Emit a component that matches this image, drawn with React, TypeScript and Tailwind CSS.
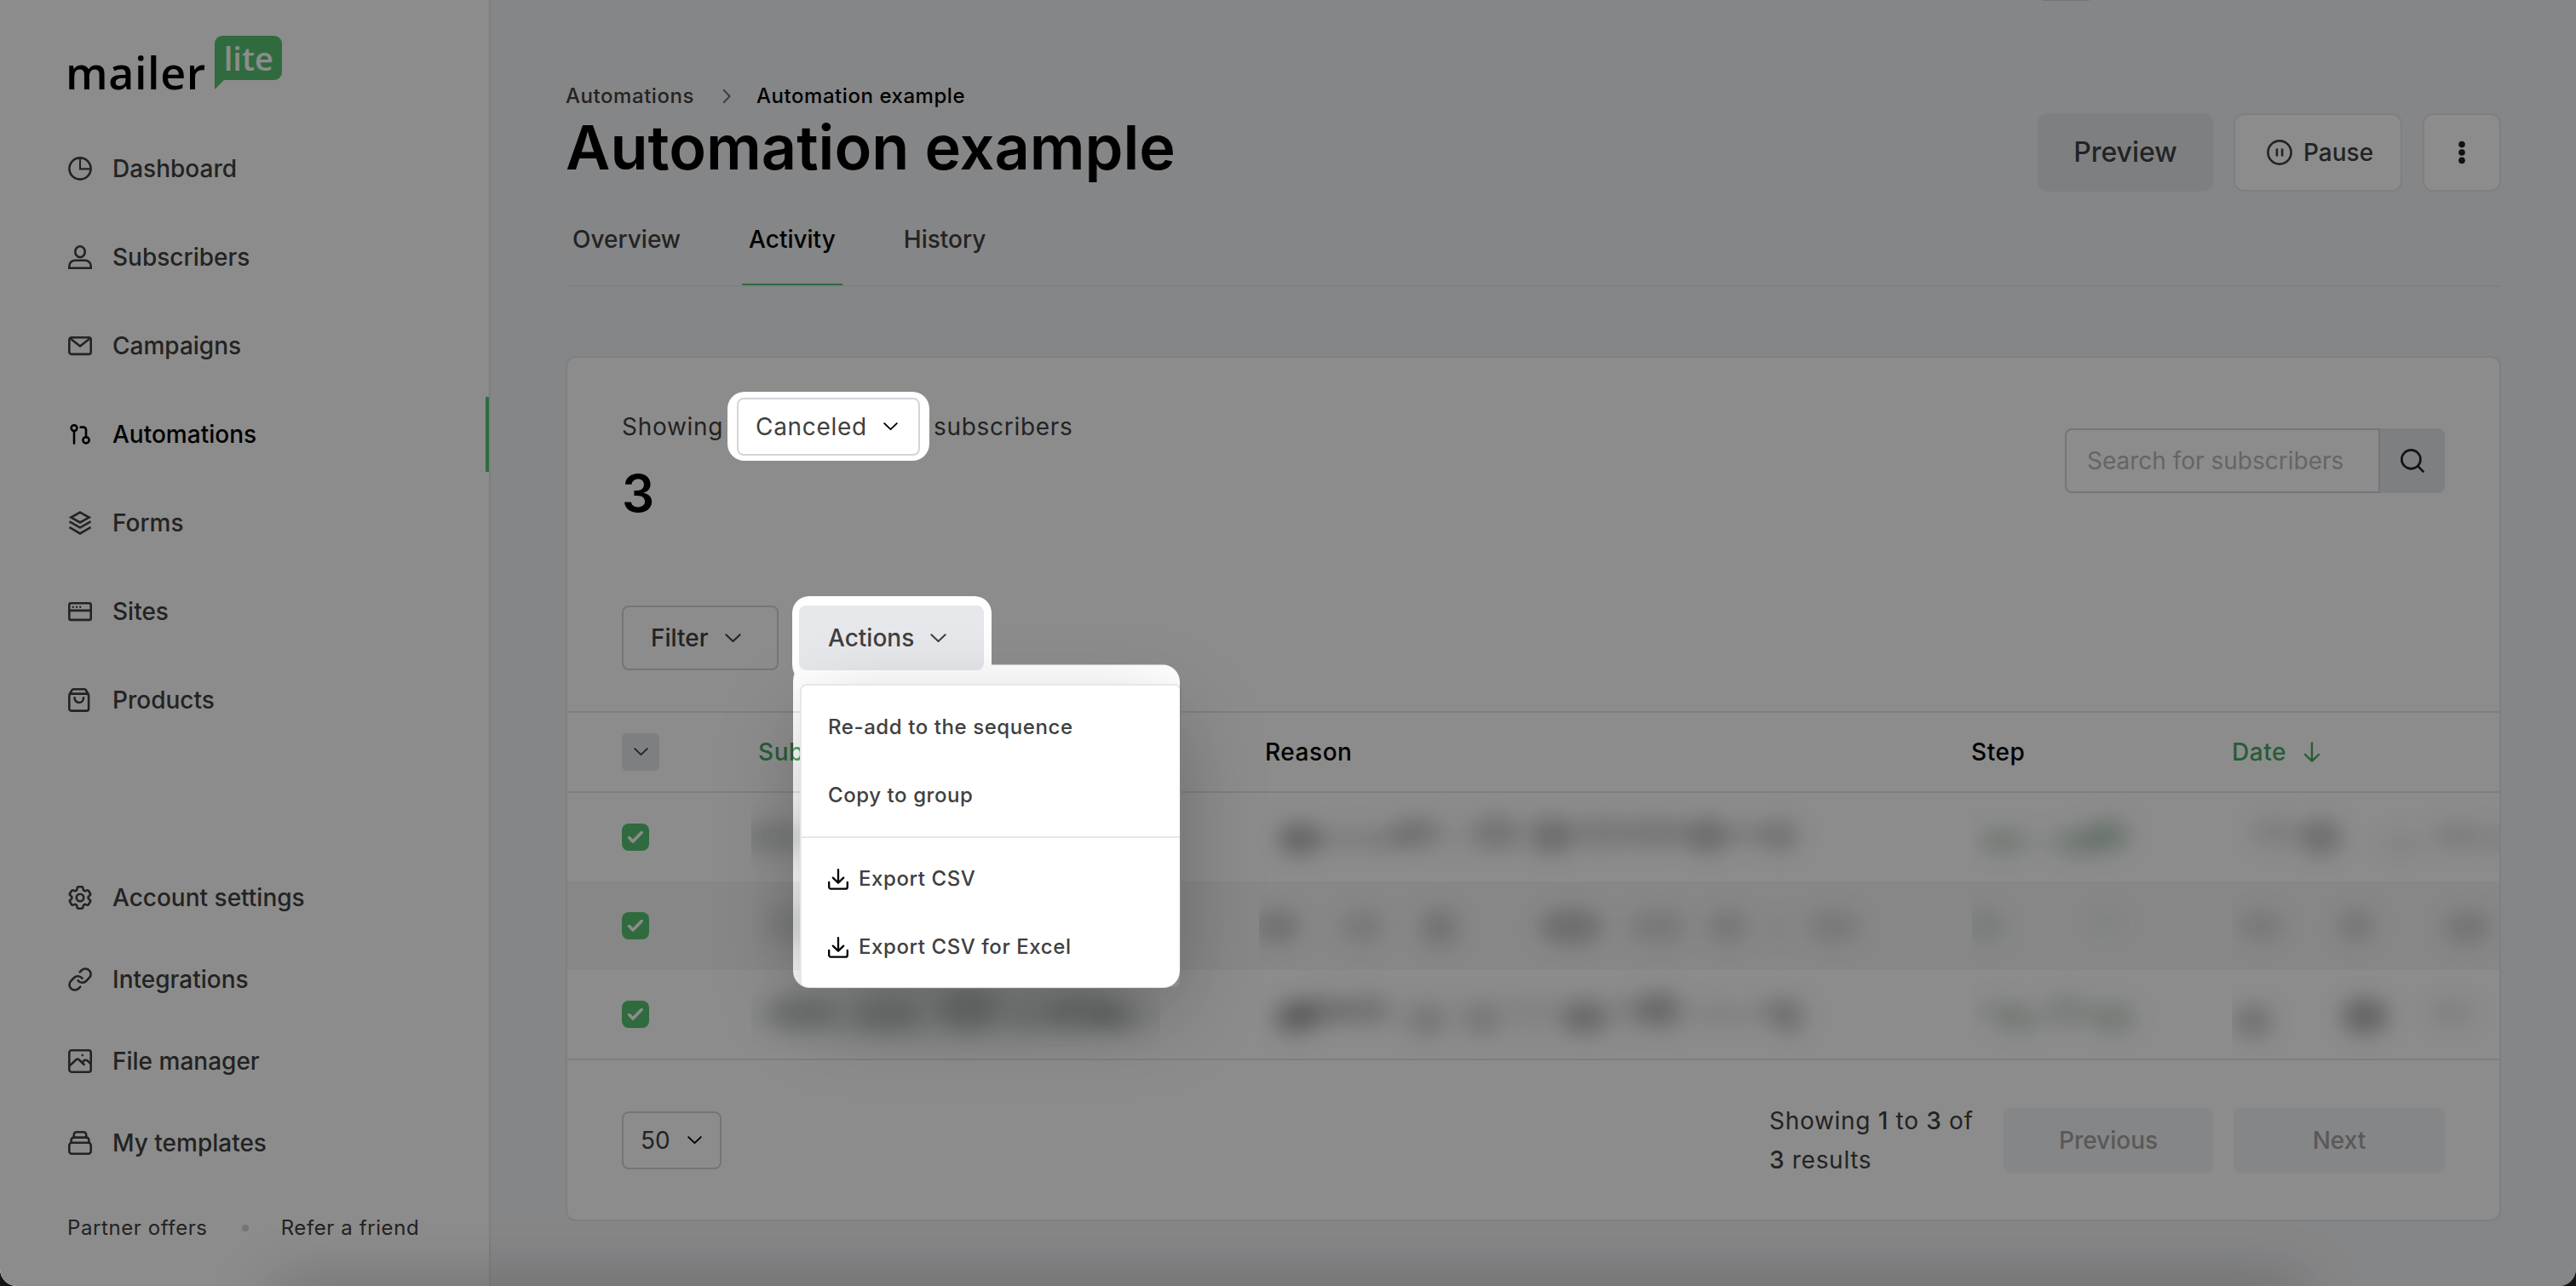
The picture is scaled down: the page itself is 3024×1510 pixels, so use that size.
import React from 'react';
import { Link } from 'lucide-react';
import { HiOutlineCog6Tooth } from 'react-icons/hi2';

type IconProps = { className?: string };

const Svg: React.FC<React.SVGProps<SVGSVGElement>> = ({ children, ...props }) => (
  <svg
    viewBox="0 0 28 28"
    fill="none"
    stroke="currentColor"
    strokeWidth={2.6}
    strokeLinecap="round"
    strokeLinejoin="round"
    className="size-7 shrink-0"
    {...props}
  >
    {children}
  </svg>
);

const DashboardIcon = () => (
  <Svg>
    <circle cx="14" cy="14" r="12.6" />
    <path d="M14 1.6V14.4H26.4" strokeWidth={2.1} strokeLinejoin="miter" />
  </Svg>
);

const SubscribersIcon = () => (
  <Svg strokeLinejoin="miter">
    <ellipse cx="14" cy="7.7" rx="5.7" ry="6.4" />
    <path d="M1.3 26.7v-2.2a6.8 6.8 0 0 1 6.8-6.8h11.8a6.8 6.8 0 0 1 6.8 6.8v2.2z" />
  </Svg>
);

const CampaignsIcon = () => (
  <Svg>
    <rect x="1.3" y="4.3" width="25.4" height="19.6" rx="2.6" />
    <path d="M2.6 5.6 14 14.6 25.4 5.6" />
  </Svg>
);

const AutomationsIcon = () => (
  <Svg>
    <circle cx="7" cy="6.6" r="3.4" />
    <path d="M7 10.2V24.6" />
    <path d="M14.6 5.6H18a3 3 0 0 1 3 3V17" />
    <circle cx="21" cy="20.8" r="3.6" />
  </Svg>
);

const FormsIcon = () => (
  <Svg strokeLinecap="butt" strokeLinejoin="miter">
    <path d="M14 1.6 24.6 7.6 14 13.4 3.4 7.6z" />
    <path d="M1.5 12.4 14 19.6 26.5 12.4" />
    <path d="M1.5 19.2 14 26.4 26.5 19.2" />
  </Svg>
);

const SitesIcon = () => (
  <Svg>
    <rect x="1.3" y="4.3" width="25.4" height="19.6" rx="2" />
    <path d="M1.8 12.9H26.4" />
    <path d="M5.8 8.7h.01M10 8.7h.01M14.2 8.7h.01" strokeWidth={2.4} />
  </Svg>
);

const ProductsIcon = () => (
  <Svg>
    <rect x="1.3" y="6.6" width="22.8" height="20" rx="2.4" />
    <path d="M1.8 7 4.6 2.2c.3-.6.8-.9 1.5-.9h13.2c.7 0 1.2.3 1.5.9L23.6 7" />
    <path d="M7.6 11.4c0 7.4 10.4 7.4 10.4 0" />
  </Svg>
);

const SettingsIcon = () => (
  <HiOutlineCog6Tooth viewBox="2.1 2.1 19.8 19.8" strokeWidth={1.85} className="size-7 shrink-0" />
);

const IntegrationsIcon = () => (
  <Link viewBox="0.9 0.9 22.2 22.2" strokeWidth={2.1} className="size-7 shrink-0" />
);

const FilesIcon = () => (
  <Svg>
    <rect x="1.3" y="1.3" width="25.4" height="25.4" rx="2.6" />
    <path d="M1.8 19.4 9.4 12.2c1-1 2.3-1 3.3 0L19.4 18.6" strokeLinecap="butt" />
    <path d="M17 16.2c.6-4 4.6-4.4 6.6-1.8l2.6 2.4" />
    <path d="M16.8 7h.01" />
  </Svg>
);

const TemplatesIcon = () => (
  <Svg>
    <rect x="1.3" y="13.7" width="25.4" height="13" rx="3" />
    <path d="M3.6 13.5v-2.9a3 3 0 0 1 3-3h14.8a3 3 0 0 1 3 3v2.9" />
    <path d="M6.8 7.4V4.3a3 3 0 0 1 3-3h8.4a3 3 0 0 1 3 3v3.1" />
  </Svg>
);

const Chevron: React.FC<IconProps> = ({ className = 'w-[19px]' }) => (
  <svg viewBox="0 0 20 11" fill="none" stroke="currentColor" strokeWidth={2.2} strokeLinecap="round" strokeLinejoin="round" className={`shrink-0 ${className}`}>
    <path d="M1.4 1.3 10 9.6 18.6 1.3" />
  </svg>
);

const ExportIcon = () => (
  <svg viewBox="0 0 24 25" fill="none" stroke="#000" strokeWidth={2.3} strokeLinecap="round" strokeLinejoin="round" className="h-[25px] w-6 shrink-0">
    <path d="M12 1.2V16.4M5.8 10.6 12 16.6l6.2-6" />
    <path d="M1.2 15.8v5.6a2.2 2.2 0 0 0 2.2 2.2h17.2a2.2 2.2 0 0 0 2.2-2.2v-5.6" />
  </svg>
);

const navItems = [
  { label: 'Dashboard', icon: <DashboardIcon /> },
  { label: 'Subscribers', icon: <SubscribersIcon /> },
  { label: 'Campaigns', icon: <CampaignsIcon /> },
  { label: 'Automations', icon: <AutomationsIcon />, active: true },
  { label: 'Forms', icon: <FormsIcon /> },
  { label: 'Sites', icon: <SitesIcon /> },
  { label: 'Products', icon: <ProductsIcon /> },
];

const secondaryItems = [
  { label: 'Account settings', icon: <SettingsIcon /> },
  { label: 'Integrations', icon: <IntegrationsIcon /> },
  { label: 'File manager', icon: <FilesIcon /> },
  { label: 'My templates', icon: <TemplatesIcon /> },
];

const Sidebar = () => (
  <aside className="flex w-[576px] shrink-0 flex-col border-r-2 border-gray-200 bg-white">
    <div className="flex h-[146px] items-start pl-[77px]">
      <span className="mt-[49px] font-['Open_Sans'] text-[52px] leading-[72px] font-semibold tracking-[0.6px] text-black">mailer</span>
      <div className="relative mt-[42px] ml-2.5 flex h-[52px] w-[79px] items-center justify-center rounded-[9px] rounded-bl-none bg-[#57c472]">
        <span className="-mt-px ml-px font-['Open_Sans'] text-[38px] leading-[52px] font-semibold text-white">lite</span>
        <svg viewBox="0 0 12 12" className="absolute top-[51px] left-0 size-3 fill-[#57c472]">
          <path d="M0 0H12L0 12z" />
        </svg>
      </div>
    </div>
    <nav>
      {navItems.map((item) => (
        <div
          key={item.label}
          className={`relative flex h-[104px] items-center gap-6 pl-20 text-[28px] font-medium ${item.active ? 'text-black' : 'text-[#404040]'}`}
        >
          {item.icon}
          <span>{item.label}</span>
          {item.active && <span className="absolute top-[8px] right-0 h-[88px] w-1 bg-[#57c472]" />}
        </div>
      ))}
    </nav>
    <div className="mt-[132px]">
      {secondaryItems.map((item) => (
        <div key={item.label} className="flex h-24 items-center gap-6 pl-20 text-[28px] font-medium text-[#404040]">
          {item.icon}
          <span>{item.label}</span>
        </div>
      ))}
    </div>
    <div className="mt-9 flex items-center pl-[79px] text-2xl tracking-[0.6px] text-[#404040]">
      <span>Partner offers</span>
      <span className="mr-[38px] ml-10 size-2 rounded-full bg-gray-300" />
      <span>Refer a friend</span>
    </div>
  </aside>
);

const Header = () => (
  <header>
    <div className="flex items-start justify-between">
      <div className="pt-[97px]">
        <div className="flex items-center text-2xl leading-8 font-medium tracking-[0.55px] text-[#404040]">
          <span>Automations</span>
          <svg viewBox="0 0 10 18" fill="none" stroke="#6b7280" strokeWidth={2} className="mr-[30px] ml-[33px] h-[18px] w-2.5">
            <path d="M1.2 1.2 8.6 9 1.2 16.8" />
          </svg>
          <span className="text-black">Automation example</span>
        </div>
        <h1 className="mt-[4px] text-[72px] leading-[80px] font-semibold text-black">Automation example</h1>
      </div>
      <div className="mt-[133px] flex gap-6 font-medium text-[#404040]">
        <button className="h-[92px] w-[206px] rounded-xl bg-gray-200 text-[32px]">Preview</button>
        <button className="flex h-[92px] w-[198px] items-center gap-[13px] rounded-xl border-2 border-gray-200 bg-white pl-[37px] text-[28px]">
          <Svg viewBox="0 0 30 30" className="size-[30px] shrink-0">
            <circle cx="15" cy="15" r="13.6" />
            <path d="M11.9 10.4v9.2M18.1 10.4v9.2" strokeLinecap="butt" />
          </Svg>
          Pause
        </button>
        <button className="flex h-[92px] w-[92px] items-center justify-center rounded-xl border-2 border-gray-200 bg-white text-[#222]">
          <svg viewBox="0 0 8 28" fill="currentColor" className="h-7 w-2">
            <circle cx="4" cy="4.6" r="3.8" />
            <circle cx="4" cy="14" r="3.8" />
            <circle cx="4" cy="23.4" r="3.8" />
          </svg>
        </button>
      </div>
    </div>
    <div className="mt-9 flex gap-16 border-b-2 border-[#e9ebee] text-[28px] leading-10 font-medium text-[#404040]">
      <span className="px-2 pb-[34px]">Overview</span>
      <span className="border-b-2 border-[#57c472] px-2 pb-8 text-black">Activity</span>
      <span className="px-2 pb-[34px]">History</span>
    </div>
  </header>
);

const ActionsMenu = () => (
  <div className="absolute top-[92px] left-px w-[448px] rounded-lg border-2 border-gray-200 bg-white pt-[9px] pb-[7px] text-2xl font-medium tracking-[0.58px] text-[#404040] shadow-[0_30px_100px_-12px_rgba(0,0,0,0.3)]">
    <div className="flex h-20 items-center px-[31px]">Re-add to the sequence</div>
    <div className="flex h-20 items-center px-[31px]">Copy to group</div>
    <div className="mt-2 mb-2 border-t-2 border-gray-200" />
    <div className="flex h-20 items-center gap-3 px-[31px]"><ExportIcon />Export CSV</div>
    <div className="flex h-20 items-center gap-3 px-[31px]"><ExportIcon />Export CSV for Excel</div>
  </div>
);

// [cx, cy, rx, ry, opacity] of each smear in a redacted cell
type Blob = [number, number, number, number, number];

interface Row {
  subscriber: Blob[];
  reason: Blob[];
  step: Blob[];
  date: Blob[];
}

const rows: Row[] = [
  {
    subscriber: [[28, 52, 40, 20, 0.22]],
    reason: [[47, 54, 26, 20, 0.42], [95, 56, 34, 14, 0.1], [150, 56, 30, 14, 0.14], [184, 46, 28, 18, 0.26], [278, 46, 28, 20, 0.24], [344, 50, 26, 22, 0.32], [403, 46, 34, 18, 0.18], [466, 46, 38, 18, 0.2], [526, 50, 26, 22, 0.32], [575, 48, 26, 14, 0.14], [612, 50, 22, 20, 0.26], [330, 50, 300, 22, 0.06]],
    step: [[35, 57, 28, 16, 0.26], [80, 57, 30, 12, 0.08], [126, 58, 28, 18, 0.28], [160, 50, 26, 20, 0.32]],
    date: [[50, 46, 30, 20, 0.14], [104, 52, 26, 22, 0.34], [200, 60, 28, 14, 0.1], [264, 50, 30, 18, 0.16], [312, 54, 24, 18, 0.12]],
  },
  {
    subscriber: [[44, 50, 32, 26, 0.14]],
    reason: [[22, 53, 26, 20, 0.28], [121, 53, 26, 20, 0.18], [212, 54, 24, 24, 0.24], [366, 53, 38, 22, 0.32], [468, 53, 36, 20, 0.18], [550, 53, 24, 20, 0.2], [610, 55, 20, 14, 0.06], [675, 53, 32, 20, 0.18]],
    step: [[16, 52, 22, 20, 0.18], [158, 46, 20, 16, 0.08]],
    date: [[34, 52, 28, 18, 0.18], [146, 52, 22, 20, 0.2], [276, 54, 28, 20, 0.24]],
  },
  {
    subscriber: [[57, 50, 38, 22, 0.26], [110, 56, 34, 16, 0.1], [160, 54, 36, 20, 0.24], [205, 54, 30, 16, 0.08], [256, 48, 36, 24, 0.28], [330, 54, 38, 16, 0.16], [390, 50, 42, 20, 0.26], [430, 56, 28, 18, 0.2], [240, 54, 260, 34, 0.08]],
    reason: [[42, 56, 26, 20, 0.44], [72, 48, 34, 18, 0.3], [125, 46, 30, 18, 0.24], [197, 60, 22, 20, 0.2], [262, 58, 22, 20, 0.18], [320, 48, 30, 12, 0.08], [382, 56, 28, 20, 0.36], [440, 46, 24, 16, 0.12], [470, 46, 26, 22, 0.34], [545, 54, 30, 14, 0.06], [600, 46, 20, 16, 0.14], [622, 54, 20, 22, 0.28], [330, 52, 300, 24, 0.06]],
    step: [[30, 48, 30, 14, 0.14], [56, 58, 28, 16, 0.22], [112, 48, 28, 18, 0.22], [165, 56, 28, 18, 0.26]],
    date: [[25, 60, 24, 20, 0.3], [156, 54, 28, 22, 0.46], [258, 50, 28, 18, 0.12]],
  },
];

const Smear: React.FC<{ blobs: Blob[]; color: string; className: string }> = ({ blobs, color, className }) => (
  <svg className={`h-[104px] overflow-hidden ${className}`} style={{ color }}>
    <g filter="url(#smear)" fill="currentColor">
      {blobs.map(([cx, cy, rx, ry, opacity], i) => (
        <ellipse key={i} cx={cx} cy={cy} rx={rx} ry={ry} opacity={opacity} />
      ))}
    </g>
  </svg>
);

const Checkbox = () => (
  <span className="ml-16 flex size-8 items-center justify-center rounded-lg bg-[#57c472]">
    <svg viewBox="0 0 20 16" fill="none" stroke="#fff" strokeWidth={3.6} strokeLinecap="round" strokeLinejoin="round" className="h-4 w-5">
      <path d="M2.6 8.6 7 13 17.2 2.6" />
    </svg>
  </span>
);

const columns = 'grid grid-cols-[216px_596px_837px_305px_1fr] items-center';

const Table = () => (
  <div>
    <div className={`${columns} h-24 border-y-2 border-gray-200 text-[28px] font-medium tracking-[0.55px] text-black`}>
      <span className="ml-16 flex size-11 items-center justify-center rounded-md bg-gray-200 text-[#404040]">
        <Chevron className="w-[17px]" />
      </span>
      <span className="pl-[8px] text-[#47a864]">Subscriber</span>
      <span className="pl-[7px]">Reason</span>
      <span className="-ml-[1px]">Step</span>
      <span className="flex items-center gap-5 text-[#47a864]">
        Date
        <svg viewBox="0 0 20 24" fill="none" stroke="currentColor" strokeWidth={2.4} strokeLinecap="round" strokeLinejoin="round" className="h-6 w-5">
          <path d="M10 1.4V22.4M2 15 10 22.6 18 15" />
        </svg>
      </span>
    </div>
    {rows.map((row, i) => (
      <div key={i} className={`${columns} h-[104px] ${i === 1 ? 'bg-[#f6f6f7]' : 'bg-white'}`}>
        <Checkbox />
        <Smear blobs={row.subscriber} color="#4e6355" className="w-[480px]" />
        <Smear blobs={row.reason} color="#666" className="w-[800px]" />
        <Smear blobs={row.step} color="#5c8a6a" className="w-[305px]" />
        <Smear blobs={row.date} color="#666" className="w-full" />
      </div>
    ))}
  </div>
);

const Card = () => (
  <section className="mt-[81px] h-[1016px] rounded-xl border-2 border-gray-200 bg-white text-[28px] text-[#404040]">
    <div className="flex h-[415px] items-start justify-between px-16">
      <div className="pt-[47px]">
        <div className="flex h-[68px] items-center tracking-[0.7px]">
          <span className="w-[135px]">Showing</span>
          <div className="flex h-[68px] w-[215px] items-center justify-between rounded-lg border-2 border-gray-300 pr-6 pl-5">
            <span>Canceled</span>
            <Chevron className="w-[17px] text-black" />
          </div>
          <span className="pl-4">subscribers</span>
        </div>
        <div className="mt-3 text-[60px] leading-[64px] font-semibold text-black">3</div>
        <div className="mt-[100px] flex gap-6 font-medium">
          <button className="flex h-[76px] w-[184px] items-center gap-[19px] rounded-lg border-2 border-gray-300 pl-8">
            Filter
            <Chevron />
          </button>
          <div className="relative z-10">
            <button className="flex h-[76px] w-[217px] items-center gap-[19px] rounded-lg bg-[#e7e8ec] pl-[34px]">
              Actions
              <Chevron />
            </button>
            <ActionsMenu />
          </div>
        </div>
      </div>
      <div className="mt-[83px] flex h-[76px] w-[446px]">
        <div className="flex flex-1 items-center rounded-l-lg border-2 border-gray-300 pl-6 text-[#b8b9bb]">Search for subscribers</div>
        <div className="flex w-[76px] items-center justify-center rounded-r-lg bg-gray-200">
          <Svg viewBox="0 0 28 28" className="size-7 text-[#222]">
            <circle cx="12.4" cy="12.4" r="11" />
            <path d="M20.4 20.4 26.6 26.6" />
          </Svg>
        </div>
      </div>
    </div>
    <Table />
    <div className="flex h-[189px] items-center border-t-2 border-gray-200 px-16">
      <div className="flex h-[68px] w-[117px] items-center gap-5 rounded-lg border-2 border-gray-300 pl-5">
        <span>50</span>
        <Chevron className="w-[17px] text-black" />
      </div>
      <p className="ml-auto w-[275px] leading-[46px] tracking-[0.7px]">
        Showing <b className="font-medium">1</b> to <b className="font-medium">3</b> of
        <br />
        <b className="font-medium">3</b> results
      </p>
      <button className="h-[76px] w-[246px] rounded-lg bg-gray-100 font-medium text-[#a3a3a3]">Previous</button>
      <button className="ml-6 h-[76px] w-[248px] rounded-lg bg-gray-100 font-medium text-[#a3a3a3]">Next</button>
    </div>
  </section>
);

// Dimming layer with the status select, the Actions button and its menu left lit
const Spotlight = () => (
  <svg viewBox="0 0 3024 1510" className="pointer-events-none absolute inset-0 z-20 h-full w-full">
    <path
      fill="#000"
      fillOpacity="0.45"
      fillRule="evenodd"
      d="M0 0H3024V1510H0Z
        M874 460H1071A20 20 0 0 1 1091 480V521A20 20 0 0 1 1071 541H874A20 20 0 0 1 854 521V480A20 20 0 0 1 874 460Z
        M950 700H1144A20 20 0 0 1 1164 720V780.500H1365A20 20 0 0 1 1385 800V1140A20 20 0 0 1 1365 1160H951A20 20 0 0 1 931 1140V800Q931 795 932.500 791Q930 786 930 780V720A20 20 0 0 1 950 700Z"
    />
  </svg>
);

export default function App() {
  return (
    <div className="h-[1510px] w-[3024px] overflow-hidden bg-[#14150f] font-['Inter',sans-serif]">
      <svg className="absolute size-0">
        <filter id="smear" x="-20%" y="-80%" width="140%" height="260%">
          <feGaussianBlur stdDeviation="12" />
        </filter>
      </svg>
      <div className="relative flex h-full w-full overflow-hidden rounded-b-[20px] bg-gray-100">
        <Sidebar />
        <main className="flex-1 px-[88px]">
          <Header />
          <Card />
        </main>
        {/* bottom edge of the floating tooltip that hangs above the page */}
        <div className="absolute top-0 left-[2397px] h-px w-[56px] rounded-b bg-gray-300" />
        <div className="absolute right-[320px] -bottom-10 left-[320px] h-10 shadow-[0_0_70px_rgba(0,0,0,0.28)]" />
        <Spotlight />
      </div>
    </div>
  );
}
